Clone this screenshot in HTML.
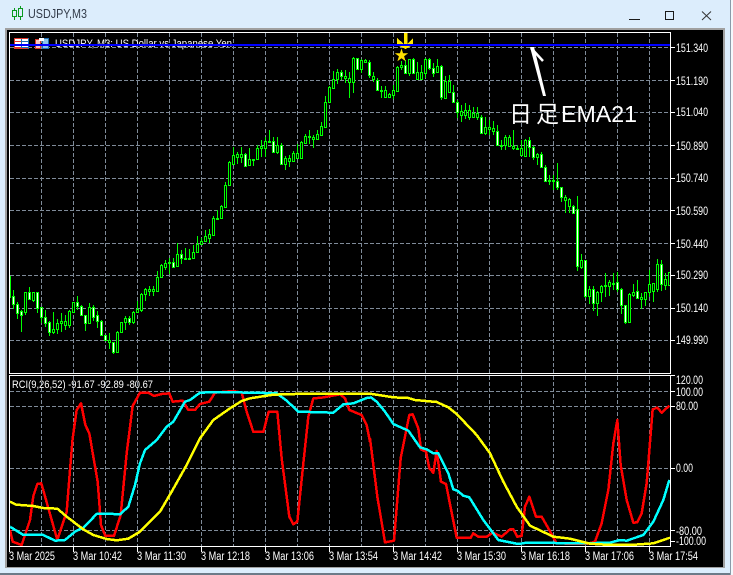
<!DOCTYPE html>
<html><head><meta charset="utf-8"><style>
html,body{margin:0;padding:0;width:733px;height:575px;overflow:hidden;background:#dcedfc}
svg{position:absolute;left:0;top:0;display:block}
text{font-family:"Liberation Sans","Noto Sans CJK JP",sans-serif}
.p text,.t text{fill:#fff;font-size:11.5px}
</style></head><body>
<svg width="733" height="575" viewBox="0 0 733 575" xmlns="http://www.w3.org/2000/svg">
<rect width="733" height="575" fill="#dcedfc"/>
<rect x="5" y="28" width="720" height="540" fill="#a0a0a0"/>
<rect x="7" y="30" width="716" height="537" fill="#000"/>
<rect x="0" y="573" width="733" height="2" fill="#6c7a88"/>
<rect x="730" y="0" width="1" height="575" fill="#8b9aa8"/>
<rect x="731" y="0" width="2" height="575" fill="#f4f8fc"/>
<!-- title -->
<g shape-rendering="crispEdges" fill="none" stroke="#0a9a1e">
<path d="M14.5 8V20M20.5 6V20"/><rect x="12.5" y="10.5" width="4" height="6" fill="#dcedfc"/><rect x="18.500" y="8.500" width="4" height="8" fill="#dcedfc"/></g>
<text x="28" y="18" font-size="12.5" fill="#333c4a" textLength="59" lengthAdjust="spacingAndGlyphs">USDJPY,M3</text>
<g shape-rendering="crispEdges" fill="none" stroke="#1a1a1a">
<path d="M629 19.5H640"/><rect x="665.5" y="11.5" width="8" height="8"/></g>
<path d="M702 11.5L711 20M711 11.5L702 20" stroke="#333" fill="none"/>
<!-- grid -->
<g stroke="#7f8b99" stroke-dasharray="4 2" shape-rendering="crispEdges" fill="none">
<path d="M41.5 33V373M73.5 33V373M105.5 33V373M137.5 33V373M169.5 33V373M201.5 33V373M233.5 33V373M265.5 33V373M297.5 33V373M329.5 33V373M361.5 33V373M393.5 33V373M425.5 33V373M457.5 33V373M489.5 33V373M521.5 33V373M553.5 33V373M585.5 33V373M617.5 33V373M649.5 33V373"/>
<path d="M10 47.5H670M10 80.5H670M10 112.5H670M10 145.5H670M10 178.5H670M10 210.5H670M10 243.5H670M10 275.5H670M10 308.5H670M10 340.5H670"/>
<path d="M41.5 376V546M73.5 376V546M105.5 376V546M137.5 376V546M169.5 376V546M201.5 376V546M233.5 376V546M265.5 376V546M297.5 376V546M329.5 376V546M361.5 376V546M393.5 376V546M425.5 376V546M457.5 376V546M489.5 376V546M521.5 376V546M553.5 376V546M585.5 376V546M617.5 376V546M649.5 376V546"/>
<path d="M10 391.5H670M10 406.5H670M10 468.5H670M10 530.5H670"/>
</g>
<!-- candles -->
<svg x="10" y="33" width="660" height="340" viewBox="10 33 660 340">
<g shape-rendering="crispEdges" stroke="#00ff00">
<path fill="none" d="M10.5 276V298M13.5 290V309M17.5 302V319M21.5 310V332M25.5 292V315M29.5 287V300M33.5 292V302M37.5 292V313M41.5 307V323M45.5 310V327M49.5 321V336M53.5 312V334M57.5 319V334M61.5 313V332M65.5 315V330M69.5 310V328M73.5 302V313M77.5 296V310M81.5 305V316M85.5 315V331M89.5 303V324M93.5 305V321M97.5 311V328M101.5 320V336M105.5 335V341M109.5 333V349M113.5 342V354M117.5 331V353M121.5 322V333M125.5 316V330M129.5 316V325M133.5 311V324M137.5 301V313M141.5 293V312M145.5 288V301M149.5 286V296M153.5 286V296M157.5 271V292M161.5 264V278M165.5 260V270M169.5 258V274M173.5 258V268M177.5 243V267M181.5 250V264M185.5 248V260M189.5 249V260M193.5 245V258M197.5 236V253M201.5 238V245M205.5 230V242M209.5 229V243M213.5 216V236M217.5 210V219M221.5 205V219M225.5 182V208M229.5 161V186M233.5 147V165M237.5 152V164M241.5 147V163M245.5 153V166M249.5 148V166M253.5 159V166M257.5 145V160M261.5 140V157M265.5 137V157M269.5 130V143M273.5 137V152M277.5 137V154M281.5 143V164M285.5 156V170M289.5 155V167M293.5 151V162M297.5 144V158M301.5 141V158M305.5 134V144M309.5 130V144M313.5 135V148M317.5 130V140M321.5 122V136M325.5 96V128M329.5 86V103M333.5 71V89M337.5 69V84M341.5 70V80M345.5 70V83M349.5 72V98M353.5 57V93M357.5 58V70M361.5 59V73M365.5 59V63M369.5 60V78M373.5 72V82M377.5 78V91M381.5 86V98M385.5 86V98M389.5 93V98M393.5 85V99M397.5 66V91M401.5 61V70M405.5 60V74M409.5 59V76M413.5 58V73M417.5 62V80M421.5 65V80M425.5 58V78M429.5 58V70M433.5 63V77M437.5 59V73M441.5 65V100M445.5 76V98M449.5 75V93M453.5 85V103M457.5 100V118M461.5 105V122M465.5 103V119M469.5 105V120M473.5 107V118M477.5 107V120M481.5 115V134M485.5 117V135M489.5 120V135M493.5 121V135M497.5 125V146M501.5 140V150M505.5 135V150M509.5 135V147M513.5 130V150M517.5 145V150M521.5 140V156M525.5 139V157M529.5 137V157M533.5 146V160M537.5 153V165M541.5 152V168M545.5 165V182M549.5 175V185M553.5 175V190M557.5 163V190M561.5 187V202M565.5 195V213M569.5 198V213M573.5 205V213M577.5 196V271M581.5 254V269M585.5 260V298M589.5 286V304M593.5 286V311M597.5 291V316M601.5 285V302M605.5 273V297M609.5 280V296M613.5 273V290M617.5 272V292M621.5 288V314M625.5 305V324M629.5 293V322M633.5 284V297M637.5 280V298M641.5 293V309M645.5 292V306M649.5 270V297M653.5 283V302M657.5 259V292M661.5 260V291M665.5 273V290M669.5 272V285"/>
<path fill="#000" d="M24.5 292.5h2v20h-2zM32.5 292.5h2v8h-2zM52.5 329.5h2v3h-2zM56.5 323.5h2v6h-2zM60.5 321.5h2v2h-2zM64.5 321.5h2v4h-2zM68.5 311.5h2v14h-2zM72.5 302.5h2v10h-2zM88.5 307.5h2v16h-2zM108.5 340.5h2v2h-2zM116.5 332.5h2v20h-2zM120.5 322.5h2v10h-2zM124.5 318.5h2v4h-2zM132.5 312.5h2v10h-2zM136.5 309.5h2v3h-2zM140.5 294.5h2v16h-2zM144.5 289.5h2v5h-2zM148.5 289.5h2v2h-2zM152.5 289.5h2v2h-2zM156.5 277.5h2v14h-2zM160.5 265.5h2v12h-2zM164.5 263.5h2v4h-2zM168.5 262.5h2v1h-2zM176.5 254.5h2v12h-2zM184.5 258.5h2v1h-2zM188.5 258.5h2v1h-2zM192.5 252.5h2v6h-2zM196.5 244.5h2v8h-2zM200.5 241.5h2v3h-2zM204.5 236.5h2v5h-2zM208.5 234.5h2v4h-2zM212.5 218.5h2v17h-2zM216.5 218.5h2v1h-2zM220.5 206.5h2v12h-2zM224.5 185.5h2v22h-2zM228.5 162.5h2v23h-2zM232.5 155.5h2v9h-2zM236.5 154.5h2v3h-2zM240.5 154.5h2v3h-2zM248.5 159.5h2v6h-2zM252.5 159.5h2v1h-2zM256.5 148.5h2v11h-2zM260.5 146.5h2v2h-2zM264.5 141.5h2v7h-2zM268.5 141.5h2v1h-2zM276.5 145.5h2v7h-2zM284.5 158.5h2v6h-2zM288.5 158.5h2v3h-2zM292.5 153.5h2v8h-2zM296.5 153.5h2v5h-2zM300.5 142.5h2v16h-2zM304.5 136.5h2v7h-2zM308.5 136.5h2v1h-2zM312.5 137.5h2v2h-2zM316.5 134.5h2v5h-2zM320.5 126.5h2v9h-2zM324.5 102.5h2v25h-2zM328.5 87.5h2v15h-2zM332.5 79.5h2v9h-2zM336.5 72.5h2v7h-2zM344.5 76.5h2v2h-2zM348.5 78.5h2v4h-2zM352.5 58.5h2v24h-2zM360.5 60.5h2v9h-2zM364.5 60.5h2v2h-2zM372.5 76.5h2v3h-2zM380.5 90.5h2v1h-2zM384.5 90.5h2v7h-2zM388.5 94.5h2v3h-2zM392.5 90.5h2v5h-2zM396.5 67.5h2v24h-2zM400.5 65.5h2v2h-2zM408.5 59.5h2v14h-2zM416.5 72.5h2v7h-2zM420.5 72.5h2v7h-2zM424.5 59.5h2v14h-2zM436.5 66.5h2v6h-2zM444.5 81.5h2v17h-2zM448.5 81.5h2v11h-2zM460.5 111.5h2v4h-2zM464.5 110.5h2v5h-2zM468.5 110.5h2v7h-2zM472.5 113.5h2v4h-2zM476.5 113.5h2v4h-2zM484.5 127.5h2v6h-2zM488.5 127.5h2v2h-2zM492.5 128.5h2v3h-2zM500.5 145.5h2v1h-2zM504.5 137.5h2v8h-2zM508.5 137.5h2v9h-2zM512.5 146.5h2v2h-2zM516.5 148.5h2v1h-2zM520.5 148.5h2v7h-2zM524.5 140.5h2v16h-2zM536.5 154.5h2v3h-2zM548.5 180.5h2v1h-2zM552.5 180.5h2v1h-2zM564.5 197.5h2v3h-2zM568.5 199.5h2v7h-2zM580.5 260.5h2v7h-2zM588.5 289.5h2v7h-2zM596.5 292.5h2v11h-2zM600.5 286.5h2v6h-2zM604.5 285.5h2v1h-2zM608.5 282.5h2v4h-2zM612.5 283.5h2v1h-2zM628.5 294.5h2v28h-2zM632.5 292.5h2v3h-2zM640.5 297.5h2v2h-2zM644.5 292.5h2v7h-2zM648.5 284.5h2v8h-2zM652.5 283.5h2v8h-2zM656.5 264.5h2v25h-2zM664.5 279.5h2v6h-2zM668.5 272.5h2v13h-2z"/>
<path fill="#fff" d="M12.5 296.5h2v8h-2zM16.5 304.5h2v9h-2zM20.5 311.5h2v4h-2zM28.5 292.5h2v7h-2zM36.5 292.5h2v16h-2zM40.5 307.5h2v10h-2zM44.5 317.5h2v6h-2zM48.5 322.5h2v10h-2zM76.5 302.5h2v4h-2zM80.5 306.5h2v9h-2zM84.5 315.5h2v8h-2zM92.5 307.5h2v10h-2zM96.5 315.5h2v6h-2zM100.5 321.5h2v14h-2zM104.5 335.5h2v5h-2zM112.5 342.5h2v10h-2zM128.5 318.5h2v4h-2zM172.5 262.5h2v5h-2zM180.5 254.5h2v4h-2zM244.5 154.5h2v12h-2zM272.5 141.5h2v11h-2zM280.5 145.5h2v19h-2zM340.5 72.5h2v4h-2zM356.5 58.5h2v11h-2zM368.5 62.5h2v13h-2zM376.5 80.5h2v10h-2zM404.5 65.5h2v8h-2zM412.5 59.5h2v14h-2zM428.5 59.5h2v9h-2zM432.5 68.5h2v5h-2zM440.5 66.5h2v31h-2zM452.5 92.5h2v10h-2zM456.5 102.5h2v10h-2zM480.5 117.5h2v16h-2zM496.5 131.5h2v14h-2zM528.5 140.5h2v7h-2zM532.5 147.5h2v10h-2zM540.5 154.5h2v13h-2zM544.5 167.5h2v14h-2zM556.5 181.5h2v6h-2zM560.5 187.5h2v10h-2zM572.5 206.5h2v7h-2zM576.5 209.5h2v57h-2zM584.5 260.5h2v36h-2zM592.5 289.5h2v14h-2zM616.5 282.5h2v7h-2zM620.5 289.5h2v16h-2zM624.5 305.5h2v17h-2zM636.5 291.5h2v7h-2zM660.5 264.5h2v20h-2z"/>
</g></svg>
<!-- frames -->
<g fill="none" stroke="#fff" shape-rendering="crispEdges">
<rect x="9.5" y="32.5" width="661" height="341"/>
<rect x="9.5" y="375.5" width="661" height="171"/>
<path d="M670 47.5h5M670 80.5h5M670 112.5h5M670 145.5h5M670 178.5h5M670 210.5h5M670 243.5h5M670 275.5h5M670 308.5h5M670 340.5h5M670 375.5h5M670 391.5h5M670 406.5h5M670 468.5h5M670 530.5h5M670 541.5h5"/>
<path d="M9.5 547v5M73.5 547v5M137.5 547v5M201.5 547v5M265.5 547v5M329.5 547v5M393.5 547v5M457.5 547v5M521.5 547v5M585.5 547v5M649.5 547v5"/>
</g>
<!-- legend -->
<g shape-rendering="crispEdges">
<rect x="14.5" y="38.5" width="14" height="10" fill="#fff" stroke="#e0362c"/><path d="M15 41.5h6M15 47.500h6" stroke="#e0362c"/><path d="M22 41.5h6M22 47.500h6" stroke="#1f6fb5"/><path d="M21.5 39v9" stroke="#1f6fb5"/><path d="M28.500 38v11" stroke="#1f6fb5"/>
<path d="M35.5 39.500h5v9h-5z" fill="#f6c9c0" stroke="#d8392c"/><path d="M42.5 38.500h6v10h-6z" fill="#8fc6ea" stroke="#1f6fb5"/><path d="M39 38h5v3h-5z" fill="#fff"/>
</g>
<text x="55" y="47" font-size="11" fill="#fff" textLength="177" lengthAdjust="spacingAndGlyphs">USDJPY, M3:  US Dollar vs Japanese Yen</text>
<!-- yellow arrow under blue line -->
<path d="M404 33H407.500V44L413 38V45L405.500 49L397 45V38L404 44Z" fill="#ffe800" shape-rendering="crispEdges"/>
<rect x="10" y="44" width="660" height="2" fill="#0000ff"/>
<path d="M401.5 48.500L403.100 53.300H408.200L404.100 56.300L405.600 61.200L401.500 58.200L397.400 61.200L398.900 56.300L394.800 53.300H399.900Z" fill="#ffe000"/>
<!-- white arrow -->
<path d="M530 47L534 47L546 96L543 96Z" fill="#fff"/>
<path d="M531 48L543 61" stroke="#fff" stroke-width="2.500" fill="none"/>
<text x="509" y="122" font-size="23" fill="#fff">日</text>
<text x="536" y="122" font-size="23" fill="#fff">足</text>
<text x="561" y="122" font-size="23" fill="#fff" textLength="76" lengthAdjust="spacingAndGlyphs">EMA21</text>
<!-- RCI -->
<svg x="10" y="376" width="660" height="170" viewBox="10 376 660 170">
<g fill="none" stroke-width="7.5" shape-rendering="crispEdges" stroke-linejoin="round">
<g transform="translate(0 370) scale(.33333)">
<polyline stroke="#ff0000" points="30,480 38,515 65,525 90,450 100,378 112,342 124,340 172,510 200,425 210,300 218,205 230,120 243,100 256,165 268,190 280,260 293,335 303,465 316,498 342,498 362,435 380,250 398,108 420,68 445,68 462,78 485,72 508,70 518,95 548,92 565,120 585,120 600,102 628,95 645,68 700,63 725,68 740,125 760,186 790,186 806,125 832,125 845,265 868,440 880,463 892,455 910,280 925,140 940,85 965,83 1020,73 1035,85 1048,120 1085,135 1100,165 1110,215"/>
<polyline stroke="#00ffff" points="30,470 70,495 130,495 165,512 195,510 225,485 250,473 290,432 340,432 360,433 385,410 405,345 420,280 435,240 470,210 500,170 520,155 555,95 570,90 600,68 660,66 750,68 830,70 860,92 895,125 1000,128 1030,103 1060,100 1100,84 1110,84"/>
<polyline stroke="#ffff00" points="30,395 48,404 100,408 130,414 172,416 200,440 250,478 280,495 320,507 350,511 385,506 420,485 480,425 515,365 560,285 600,205 640,150 690,115 725,93 750,85 820,74 918,71 1110,72"/>
</g>
<g transform="translate(370 370) scale(.33333)">
<polyline stroke="#ff0000" points="0,205 22,380 45,517 72,512 92,265 118,135 128,133 145,175 153,238 168,245 178,295 190,308 200,243 213,335 228,342 260,503 302,503 310,490 325,500 350,500 368,488 395,500 420,478 430,478 442,500 455,498 465,410 478,380 498,440 515,440 535,475 560,520 650,522 675,515 695,460 715,360 730,220 742,150 752,285 770,390 790,458 802,457 815,430 830,340 848,118 862,113 875,128 898,107"/>
<polyline stroke="#00ffff" points="0,80 20,95 45,125 70,162 115,182 150,232 170,238 190,250 205,250 235,310 250,358 262,362 280,377 298,382 340,450 385,510 445,522 470,518 640,520 720,518 750,510 770,512 820,495 850,455 880,390 898,330"/>
<polyline stroke="#ffff00" points="0,71 70,82 115,84 135,90 200,96 235,112 260,132 320,195 360,250 400,335 440,410 480,467 550,500 600,506 660,521 720,525 780,525 850,520 900,503"/>
</g></g></svg>
<text x="12" y="388" font-size="11" fill="#fff" textLength="141" lengthAdjust="spacingAndGlyphs">RCI(9,26,52) -91.67 -92.89 -80.67</text>
<!-- price axis -->
<g class="p">
<text x="676" y="52" textLength="32" lengthAdjust="spacingAndGlyphs">151.340</text><text x="676" y="85" textLength="32" lengthAdjust="spacingAndGlyphs">151.190</text><text x="676" y="116" textLength="32" lengthAdjust="spacingAndGlyphs">151.040</text><text x="676" y="150" textLength="32" lengthAdjust="spacingAndGlyphs">150.890</text><text x="676" y="182" textLength="32" lengthAdjust="spacingAndGlyphs">150.740</text><text x="676" y="215" textLength="32" lengthAdjust="spacingAndGlyphs">150.590</text><text x="676" y="248" textLength="32" lengthAdjust="spacingAndGlyphs">150.440</text><text x="676" y="279" textLength="32" lengthAdjust="spacingAndGlyphs">150.290</text><text x="676" y="312" textLength="32" lengthAdjust="spacingAndGlyphs">150.140</text><text x="676" y="344" textLength="32" lengthAdjust="spacingAndGlyphs">149.990</text>
<text x="676" y="384" textLength="27" lengthAdjust="spacingAndGlyphs">120.00</text><text x="676" y="396" textLength="27" lengthAdjust="spacingAndGlyphs">100.00</text><text x="676" y="410" textLength="22" lengthAdjust="spacingAndGlyphs">80.00</text><text x="676" y="472" textLength="17" lengthAdjust="spacingAndGlyphs">0.00</text><text x="676" y="535" textLength="26" lengthAdjust="spacingAndGlyphs">-80.00</text><text x="676" y="545" textLength="30" lengthAdjust="spacingAndGlyphs">-100.00</text>
</g>
<g class="t">
<text x="9" y="560" textLength="46" lengthAdjust="spacingAndGlyphs">3 Mar 2025</text><text x="73" y="560" textLength="49" lengthAdjust="spacingAndGlyphs">3 Mar 10:42</text><text x="137" y="560" textLength="49" lengthAdjust="spacingAndGlyphs">3 Mar 11:30</text><text x="201" y="560" textLength="49" lengthAdjust="spacingAndGlyphs">3 Mar 12:18</text><text x="265" y="560" textLength="49" lengthAdjust="spacingAndGlyphs">3 Mar 13:06</text><text x="329" y="560" textLength="49" lengthAdjust="spacingAndGlyphs">3 Mar 13:54</text><text x="393" y="560" textLength="49" lengthAdjust="spacingAndGlyphs">3 Mar 14:42</text><text x="457" y="560" textLength="49" lengthAdjust="spacingAndGlyphs">3 Mar 15:30</text><text x="521" y="560" textLength="49" lengthAdjust="spacingAndGlyphs">3 Mar 16:18</text><text x="585" y="560" textLength="49" lengthAdjust="spacingAndGlyphs">3 Mar 17:06</text><text x="649" y="560" textLength="49" lengthAdjust="spacingAndGlyphs">3 Mar 17:54</text>
</g>
</svg>
</body></html>
